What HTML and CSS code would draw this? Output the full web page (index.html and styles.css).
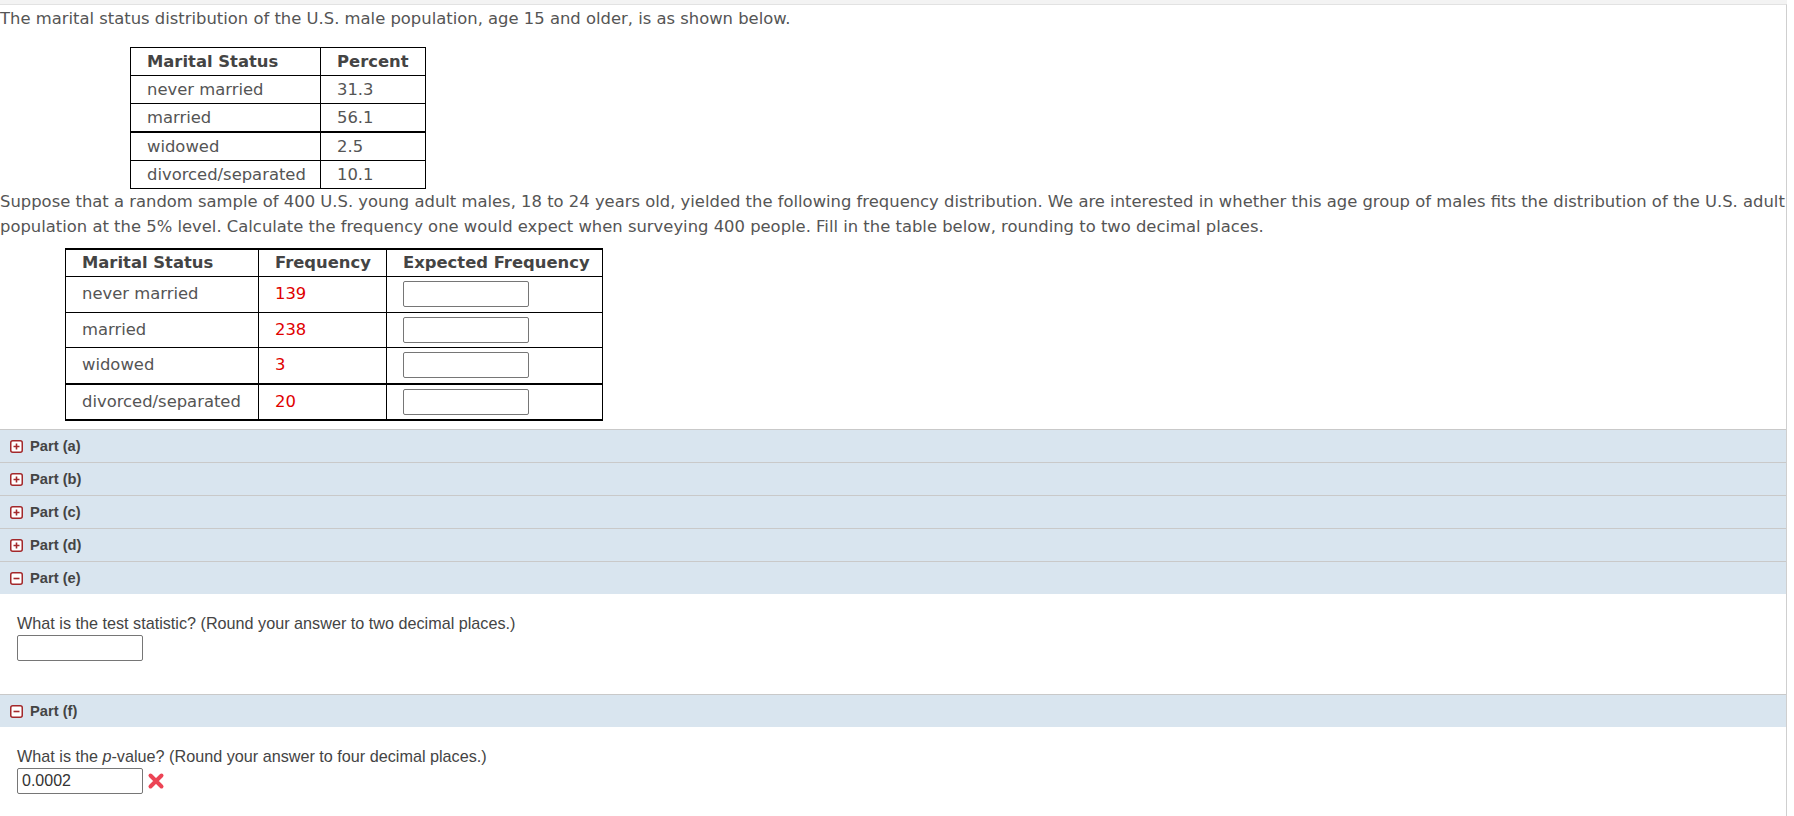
FILE: index.html
```html
<!DOCTYPE html>
<html>
<head>
<meta charset="utf-8">
<link rel="stylesheet" href="styles.css">
</head>
<body>
<div class="topstrip"></div>
<div class="page">
  <p class="intro">The marital status distribution of the U.S. male population, age 15 and older, is as shown below.</p>
  <table class="t1">
    <colgroup><col class="t1c1"><col class="t1c2"></colgroup>
    <tr><th>Marital Status</th><th>Percent</th></tr>
    <tr><td>never married</td><td>31.3</td></tr>
    <tr class="thick"><td>married</td><td>56.1</td></tr>
    <tr><td>widowed</td><td>2.5</td></tr>
    <tr><td>divorced/separated</td><td>10.1</td></tr>
  </table>
  <p class="para">Suppose that a random sample of 400 U.S. young adult males, 18 to 24 years old, yielded the following frequency distribution. We are interested in whether this age group of males fits the distribution of the U.S. adult population at the 5% level. Calculate the frequency one would expect when surveying 400 people. Fill in the table below, rounding to two decimal places.</p>
  <table class="t2">
    <colgroup><col class="t2c1"><col class="t2c2"><col class="t2c3"></colgroup>
    <tr><th>Marital Status</th><th>Frequency</th><th>Expected Frequency</th></tr>
    <tr><td>never married</td><td class="red">139</td><td><input class="box" type="text"></td></tr>
    <tr><td>married</td><td class="red">238</td><td><input class="box" type="text"></td></tr>
    <tr class="thick"><td>widowed</td><td class="red">3</td><td><input class="box" type="text"></td></tr>
    <tr><td>divorced/separated</td><td class="red">20</td><td><input class="box" type="text"></td></tr>
  </table>

  <div class="parts">
    <div class="part-head"><svg class="ico" viewBox="0 0 13 13"><rect x="0.75" y="0.75" width="11.5" height="11.5" rx="2" fill="#fff" stroke="#a3282b" stroke-width="1.5"/><path d="M3.5 6.5h6M6.5 3.5v6" stroke="#a3282b" stroke-width="1.6"/></svg><span>Part (a)</span></div>
    <div class="part-head"><svg class="ico" viewBox="0 0 13 13"><rect x="0.75" y="0.75" width="11.5" height="11.5" rx="2" fill="#fff" stroke="#a3282b" stroke-width="1.5"/><path d="M3.5 6.5h6M6.5 3.5v6" stroke="#a3282b" stroke-width="1.6"/></svg><span>Part (b)</span></div>
    <div class="part-head"><svg class="ico" viewBox="0 0 13 13"><rect x="0.75" y="0.75" width="11.5" height="11.5" rx="2" fill="#fff" stroke="#a3282b" stroke-width="1.5"/><path d="M3.5 6.5h6M6.5 3.5v6" stroke="#a3282b" stroke-width="1.6"/></svg><span>Part (c)</span></div>
    <div class="part-head"><svg class="ico" viewBox="0 0 13 13"><rect x="0.75" y="0.75" width="11.5" height="11.5" rx="2" fill="#fff" stroke="#a3282b" stroke-width="1.5"/><path d="M3.5 6.5h6M6.5 3.5v6" stroke="#a3282b" stroke-width="1.6"/></svg><span>Part (d)</span></div>
    <div class="part-head"><svg class="ico" viewBox="0 0 13 13"><rect x="0.75" y="0.75" width="11.5" height="11.5" rx="2" fill="#fff" stroke="#a3282b" stroke-width="1.5"/><path d="M3.5 6.5h6" stroke="#a3282b" stroke-width="1.6"/></svg><span>Part (e)</span></div>
    <div class="part-body">
      <div class="q">What is the test statistic? (Round your answer to two decimal places.)</div>
      <div class="answer"><input class="box" type="text"></div>
    </div>
    <div class="part-head"><svg class="ico" viewBox="0 0 13 13"><rect x="0.75" y="0.75" width="11.5" height="11.5" rx="2" fill="#fff" stroke="#a3282b" stroke-width="1.5"/><path d="M3.5 6.5h6" stroke="#a3282b" stroke-width="1.6"/></svg><span>Part (f)</span></div>
    <div class="part-body">
      <div class="q">What is the <i>p</i>-value? (Round your answer to four decimal places.)</div>
      <div class="answer"><input class="box filled" type="text" value="0.0002"><svg class="xmark" viewBox="0 0 18 18"><path d="M3.5 3.5L14.5 14.5M14.5 3.5L3.5 14.5" stroke="#ec4455" stroke-width="4" stroke-linecap="round"/></svg></div>
    </div>
  </div>
</div>
</body>
</html>
```

FILE: styles.css
```css
html, body {
  margin: 0;
  padding: 0;
  background: #fff;
}
body {
  font-family: "DejaVu Sans", Verdana, sans-serif;
  font-size: 16.4px;
  color: #555;
}
.topstrip {
  width: 1787px;
  height: 4px;
  background: #f3f3f3;
}
.page {
  width: 1787px;
  border-top: 1px solid #e2e2e2;
  border-right: 1px solid #cfcfcf;
  min-height: 811px;
  box-sizing: border-box;
}
.intro {
  margin: 0 0 16px 0;
  padding-top: 1px;
  line-height: 25px;
}
.para {
  margin: 0 0 9px 0;
  line-height: 25px;
}
table {
  border-collapse: collapse;
  table-layout: fixed;
}
th, td {
  border: 1px solid #000;
  text-align: left;
  padding: 0 16px;
  white-space: nowrap;
}
th {
  font-weight: bold;
  color: #444;
}
.t1 {
  margin-left: 130px;
  width: 295px;
}
.t1c1 { width: 190px; }
.t1c2 { width: 105px; }
.t1 th, .t1 td {
  line-height: 20px;
  padding-top: 4px;
  padding-bottom: 3px;
}
.t1 tr.thick td {
  border-bottom: 2px solid #000;
}
.t2 {
  margin-left: 65px;
  width: 537px;
  border-top: 2px solid #000;
  border-bottom: 2px solid #000;
}
.t2c1 { width: 193px; }
.t2c2 { width: 128px; }
.t2c3 { width: 216px; }
.t2 th {
  line-height: 20px;
  padding-top: 3px;
  padding-bottom: 3px;
  border-top: 2px solid #000;
}
.t2 td {
  line-height: 26px;
  padding-top: 4px;
  padding-bottom: 4.5px;
}
.t2 tr:last-child td {
  border-bottom: 2px solid #000;
}
.t2 tr.thick td {
  border-bottom: 2px solid #000;
}
.red {
  color: #e00000;
}
.box {
  display: block;
  box-sizing: border-box;
  width: 126px;
  height: 26px;
  margin: 0;
  border: 1px solid #767676;
  border-radius: 2px;
  background: #fff;
  font-family: "Liberation Sans", Arial, sans-serif;
  font-size: 16px;
  color: #333;
  padding: 0 4px;
}
.parts {
  margin-top: 8px;
  font-family: "Liberation Sans", Arial, sans-serif;
}
.part-head {
  display: flex;
  align-items: center;
  gap: 7px;
  height: 32px;
  border-top: 1px solid #c9c9c9;
  background: #d9e5ef;
  padding-left: 10px;
  font-weight: bold;
  font-size: 14.7px;
  color: #444;
}
.ico {
  width: 13px;
  height: 13px;
  flex: none;
}
.part-body {
  padding: 19px 17px 33px 17px;
  font-size: 16.2px;
  color: #444;
}
.q {
  line-height: 21px;
}
.answer {
  margin-top: 1px;
  display: flex;
  align-items: center;
  gap: 4px;
}
.xmark {
  width: 18px;
  height: 18px;
  flex: none;
}
```
